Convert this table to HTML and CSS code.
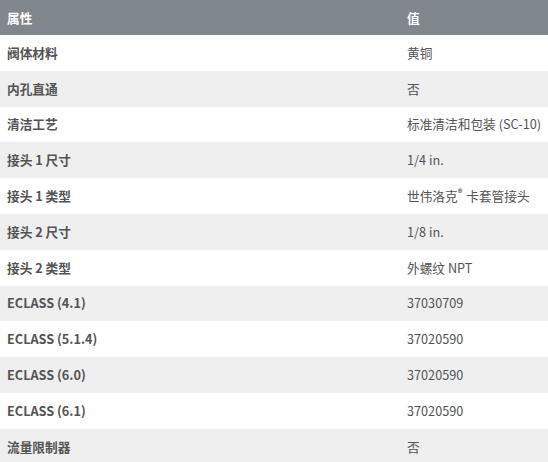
FILE: index.html
```html
<!DOCTYPE html>
<html lang="zh">
<head>
<meta charset="utf-8">
<link rel="stylesheet" href="styles.css">
</head>
<body>
<table class="spec">
  <thead>
    <tr><th class="col-name">属性</th><th class="col-value">值</th></tr>
  </thead>
  <tbody>
    <tr><td class="col-name">阀体材料</td><td class="col-value">黄铜</td></tr>
    <tr><td class="col-name">内孔直通</td><td class="col-value">否</td></tr>
    <tr><td class="col-name">清洁工艺</td><td class="col-value">标准清洁和包装 (SC-10)</td></tr>
    <tr><td class="col-name">接头 1 尺寸</td><td class="col-value">1/4 in.</td></tr>
    <tr><td class="col-name">接头 1 类型</td><td class="col-value">世伟洛克<sup class="reg">®</sup> 卡套管接头</td></tr>
    <tr><td class="col-name">接头 2 尺寸</td><td class="col-value">1/8 in.</td></tr>
    <tr><td class="col-name">接头 2 类型</td><td class="col-value">外螺纹 NPT</td></tr>
    <tr><td class="col-name">ECLASS (4.1)</td><td class="col-value">37030709</td></tr>
    <tr><td class="col-name">ECLASS (5.1.4)</td><td class="col-value">37020590</td></tr>
    <tr><td class="col-name">ECLASS (6.0)</td><td class="col-value">37020590</td></tr>
    <tr><td class="col-name">ECLASS (6.1)</td><td class="col-value">37020590</td></tr>
    <tr><td class="col-name">流量限制器</td><td class="col-value">否</td></tr>
  </tbody>
</table>
</body>
</html>
```

FILE: styles.css
```css
html, body {
  margin: 0;
  padding: 0;
  background: #ffffff;
}

body {
  font-family: "Noto Sans CJK SC", "Noto Sans", sans-serif;
  font-size: 12.7px;
  color: #545454;
}

.spec {
  width: 100%;
  border-collapse: collapse;
  border-spacing: 0;
  table-layout: fixed;
}

.spec th,
.spec td {
  padding: 0 7px;
  text-align: left;
  vertical-align: middle;
  line-height: 18px;
  white-space: nowrap;
}

.spec th {
  height: 35px;
  background: #80878d;
  color: #ffffff;
  font-weight: 700;
}

.spec td {
  height: 35.8px;
}

.spec td.col-name {
  font-weight: 700;
}

.spec tbody tr:nth-child(even) td {
  background: #efefef;
}

.col-name {
  width: 386px;
}

.reg {
  font-size: 9px;
  font-weight: 700;
  vertical-align: top;
  line-height: 13px;
  margin-right: 1px;
}
```
